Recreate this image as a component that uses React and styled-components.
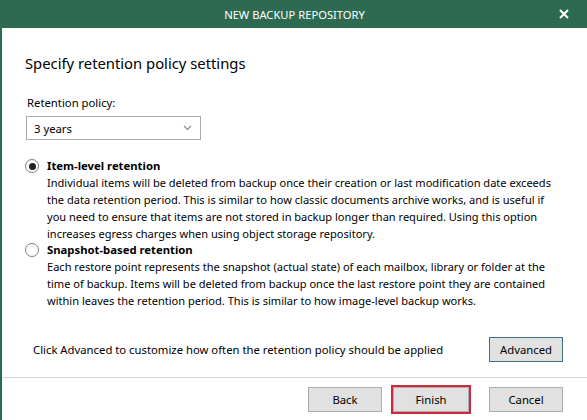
import React, { useState } from 'react';
import styled, { createGlobalStyle } from 'styled-components';

const GlobalStyle = createGlobalStyle`
  html, body {
    margin: 0;
    padding: 0;
    background: #ffffff;
  }
  body {
    font-family: "Noto Sans", "Open Sans", sans-serif;
    color: #000;
  }
`;

const Window = styled.div`
  width: 587px;
  height: 420px;
  box-sizing: border-box;
  border-left: 2px solid #2c6b52;
  display: flex;
  flex-direction: column;
  background: #fff;
  overflow: hidden;
`;

const TitleBar = styled.div`
  height: 28px;
  flex: none;
  background: #2c6b52;
  color: #fff;
  display: grid;
  grid-template-columns: 1fr auto 1fr;
  align-items: center;
  font-size: 11.2px;
`;

const Title = styled.div`
  grid-column: 2;
`;

const Close = styled.div`
  grid-column: 3;
  justify-self: end;
  margin-right: 18px;
  display: flex;
`;

const Body = styled.div`
  flex: 1;
  padding: 0 24px 0 23px;
  display: flex;
  flex-direction: column;
`;

const Heading = styled.h1`
  margin: 25px 0 0;
  font-size: 14.8px;
  font-weight: 400;
  line-height: 20px;
`;

const Label = styled.div`
  margin-top: 22px;
  font-size: 11.3px;
  line-height: 16px;
  padding-left: 2px;
`;

const Select = styled.div`
  margin: 5px 0 0 1px;
  width: 175px;
  height: 24px;
  box-sizing: border-box;
  border: 1px solid #a9a9a9;
  display: flex;
  align-items: center;
  justify-content: space-between;
  padding: 0 8px 0 7px;
  font-size: 11.3px;
`;

const Options = styled.div`
  margin-top: 18px;
  display: flex;
  flex-direction: column;
`;

const Option = styled.div`
  display: grid;
  grid-template-columns: 22px 1fr;
  cursor: pointer;
`;

const Radio = styled.span`
  width: 14px;
  height: 14px;
  margin-top: 1px;
  box-sizing: border-box;
  border-radius: 50%;
  border: 1px solid #7f7f7f;
  background: #fff;
  display: flex;
  align-items: center;
  justify-content: center;

  &::after {
    content: '';
    width: 7px;
    height: 7px;
    border-radius: 50%;
    background: ${(p) => (p.$checked ? '#222' : 'transparent')};
  }
`;

const OptionTitle = styled.div`
  font-size: 11.3px;
  font-weight: 700;
  line-height: 16px;
`;

const OptionText = styled.div`
  font-size: 11.05px;
  line-height: 17px;
  white-space: nowrap;
`;

const AdvancedRow = styled.div`
  margin-top: auto;
  margin-bottom: 15px;
  display: flex;
  align-items: center;
  justify-content: space-between;
  padding-left: 8px;
  font-size: 11.3px;
`;

const Button = styled.button`
  font-family: inherit;
  font-size: 11.3px;
  color: #000;
  width: ${(p) => p.$w || 74}px;
  height: 25px;
  box-sizing: border-box;
  background: #e1e1e1;
  border: 1px solid ${(p) => (p.$focus ? '#3f6f84' : '#adadad')};
  padding: 0;
  cursor: pointer;
  outline: ${(p) => (p.$primary ? '2px solid #cc2a36' : 'none')};
  outline-offset: 0;
`;

const Footer = styled.div`
  flex: none;
  height: 42px;
  border-top: 1px solid #d4d4d4;
  display: flex;
  align-items: center;
  justify-content: flex-end;
  padding: 0 24px 0 0;
`;

const FooterButtons = styled.div`
  display: flex;
  gap: 11px;
  align-items: center;

  & > :last-child {
    margin-left: 9px;
  }
`;

const Chevron = () => (
  <svg width="9" height="6" viewBox="0 0 9 6">
    <path d="M1 1l3.5 3.5L8 1" fill="none" stroke="#8a8a8a" strokeWidth="1.2" />
  </svg>
);

const CloseIcon = () => (
  <svg width="10" height="10" viewBox="0 0 10 10">
    <path d="M1 1l8 8M9 1L1 9" stroke="#fff" strokeWidth="2" />
  </svg>
);

const itemLines = [
  'Individual items will be deleted from backup once their creation or last modification date exceeds',
  'the data retention period. This is similar to how classic documents archive works, and is useful if',
  'you need to ensure that items are not stored in backup longer than required. Using this option',
  'increases egress charges when using object storage repository.',
];

const snapshotLines = [
  'Each restore point represents the snapshot (actual state) of each mailbox, library or folder at the',
  'time of backup. Items will be deleted from backup once the last restore point they are contained',
  'within leaves the retention period. This is similar to how image-level backup works.',
];

export default function App() {
  const [mode, setMode] = useState('item');

  return (
    <>
      <GlobalStyle />
      <Window>
        <TitleBar>
          <Title>NEW BACKUP REPOSITORY</Title>
          <Close>
            <CloseIcon />
          </Close>
        </TitleBar>
        <Body>
          <Heading>Specify retention policy settings</Heading>
          <Label>Retention policy:</Label>
          <Select>
            <span>3 years</span>
            <Chevron />
          </Select>
          <Options>
            <Option onClick={() => setMode('item')}>
              <Radio $checked={mode === 'item'} />
              <div>
                <OptionTitle>Item-level retention</OptionTitle>
                {itemLines.map((l) => (
                  <OptionText key={l}>{l}</OptionText>
                ))}
              </div>
            </Option>
            <Option onClick={() => setMode('snapshot')}>
              <Radio $checked={mode === 'snapshot'} />
              <div>
                <OptionTitle>Snapshot-based retention</OptionTitle>
                {snapshotLines.map((l) => (
                  <OptionText key={l}>{l}</OptionText>
                ))}
              </div>
            </Option>
          </Options>
          <AdvancedRow>
            <span>Click Advanced to customize how often the retention policy should be applied</span>
            <Button $focus>Advanced</Button>
          </AdvancedRow>
        </Body>
        <Footer>
          <FooterButtons>
            <Button>Back</Button>
            <Button $primary $w={76}>Finish</Button>
            <Button>Cancel</Button>
          </FooterButtons>
        </Footer>
      </Window>
    </>
  );
}
